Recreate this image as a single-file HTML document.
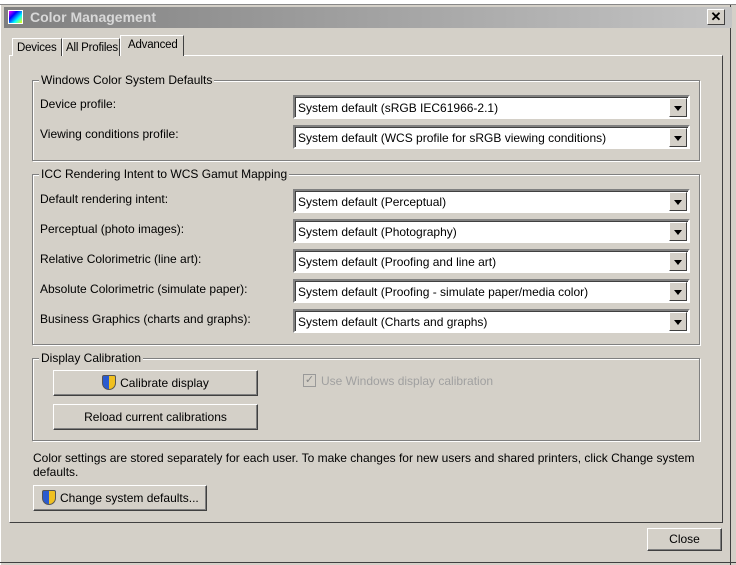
<!DOCTYPE html>
<html><head><style>
*{box-sizing:border-box;margin:0;padding:0}
body{width:736px;height:565px;background:#d4d0c8;font-family:"Liberation Sans",sans-serif;font-size:12px;color:#000;position:relative;overflow:hidden}
.a{position:absolute;white-space:nowrap}
.title{left:4px;top:7px;width:728px;height:21px;background:linear-gradient(to right,#7f7f7f,#c4c4c4)}
.title span{position:absolute;left:26px;top:2px;font-weight:bold;font-size:14px;color:#d8d8d8}
.tab{position:absolute;white-space:nowrap;border:1px solid #fff;border-right-color:#404040;border-bottom:none;background:#d4d0c8;padding:3px 0 0 4px;font-size:11.5px;letter-spacing:-0.2px}
.panel{left:9px;top:55px;width:714px;height:468px;border:1px solid;border-color:#fff #404040 #404040 #fff}
.grp{position:absolute;border:1px solid #808080;box-shadow:1px 1px 0 #fff inset,1px 1px 0 #fff}
.grp .lg{position:absolute;left:6px;top:-8px;background:#d4d0c8;padding:0 2px;white-space:nowrap}
.cb{position:absolute;left:293px;width:397px;height:24px;background:#fff;border:2px solid;border-color:#808080 #fff #fff #808080;box-shadow:inset 1px 1px 0 #404040}
.cb span{position:absolute;left:3px;top:4px;white-space:nowrap}
.cb i{position:absolute;right:1px;top:1px;width:18px;height:19px;background:#d4d0c8;border:1px solid;border-color:#fff #404040 #404040 #fff}
.cb i:after{content:"";position:absolute;left:4px;top:7px;border:4px solid transparent;border-top:5px solid #000;border-bottom:0}
.btn{position:absolute;white-space:nowrap;background:#d4d0c8;border:1px solid;border-color:#fff #404040 #404040 #fff;box-shadow:inset -1px -1px 0 #808080;text-align:center;line-height:24px}
.sh{display:inline-block;width:14px;height:15px;vertical-align:-3px;margin-right:4px;background:linear-gradient(90deg,#2a5bd0 50%,#f0c020 50%);border-radius:2px 2px 7px 7px;border:1px solid #555}
</style></head><body>
<div class="a" style="left:0;top:0;width:736px;height:5px;background:#fff;border-bottom:1px solid #888"></div>
<div class="a" style="left:0;top:5px;width:3px;height:560px;background:#d4d0c8;border-left:1px solid #fff"></div>
<div class="a" style="left:730px;top:5px;width:6px;height:560px;background:#d4d0c8;border-left:1px solid #404040"></div>
<div class="a" style="left:0;top:562px;width:736px;height:3px;border-top:1px solid #404040"></div>
<div class="a title"><div class="a" style="left:4px;top:3px;width:15px;height:14px;background:linear-gradient(135deg,#f0f,#00f,#0ff,#ff0);border:1px solid #fff"></div><span>Color Management</span>
<div class="a" style="left:703px;top:2px;width:18px;height:16px;background:#d4d0c8;border:1px solid;border-color:#fff #404040 #404040 #fff;font-weight:bold;font-size:13px;text-align:center;line-height:14px">✕</div></div>
<div class="a panel"></div>
<div class="tab" style="left:12px;top:38px;width:50px;height:18px">Devices</div>
<div class="tab" style="left:62px;top:38px;width:58px;height:18px;padding-left:3px">All Profiles</div>
<div class="tab" style="left:120px;top:35px;width:64px;height:21px;padding-left:7px">Advanced</div>

<div class="grp" style="left:32px;top:80px;width:668px;height:81px"><span class="lg">Windows Color System Defaults</span></div>
<div class="a" style="left:40px;top:97px">Device profile:</div>
<div class="cb" style="top:95px"><span>System default (sRGB IEC61966-2.1)</span><i></i></div>
<div class="a" style="left:40px;top:127px">Viewing conditions profile:</div>
<div class="cb" style="top:125px"><span>System default (WCS profile for sRGB viewing conditions)</span><i></i></div>

<div class="grp" style="left:32px;top:174px;width:668px;height:171px"><span class="lg">ICC Rendering Intent to WCS Gamut Mapping</span></div>
<div class="a" style="left:40px;top:192px">Default rendering intent:</div>
<div class="cb" style="top:189px"><span>System default (Perceptual)</span><i></i></div>
<div class="a" style="left:40px;top:222px">Perceptual (photo images):</div>
<div class="cb" style="top:219px"><span>System default (Photography)</span><i></i></div>
<div class="a" style="left:40px;top:252px">Relative Colorimetric (line art):</div>
<div class="cb" style="top:249px"><span>System default (Proofing and line art)</span><i></i></div>
<div class="a" style="left:40px;top:282px">Absolute Colorimetric (simulate paper):</div>
<div class="cb" style="top:279px"><span>System default (Proofing - simulate paper/media color)</span><i></i></div>
<div class="a" style="left:40px;top:312px">Business Graphics (charts and graphs):</div>
<div class="cb" style="top:309px"><span>System default (Charts and graphs)</span><i></i></div>

<div class="grp" style="left:32px;top:358px;width:668px;height:83px"><span class="lg">Display Calibration</span></div>
<div class="btn" style="left:53px;top:370px;width:205px;height:26px"><span class="sh"></span>Calibrate display</div>
<div class="btn" style="left:53px;top:404px;width:205px;height:26px">Reload current calibrations</div>
<div class="a" style="left:303px;top:374px;width:13px;height:13px;border:1px solid #999;background:#d4d0c8;color:#888;font-size:11px;line-height:11px;text-align:center">✓</div>
<div class="a" style="left:321px;top:374px;color:#a0a0a0">Use Windows display calibration</div>

<div class="a" style="left:33px;top:451px">Color settings are stored separately for each user. To make changes for new users and shared printers, click Change system</div>
<div class="a" style="left:33px;top:465px">defaults.</div>
<div class="btn" style="left:33px;top:485px;width:174px;height:26px;text-align:left;padding-left:8px"><span class="sh"></span>Change system defaults...</div>
<div class="btn" style="left:647px;top:528px;width:75px;height:23px;line-height:21px">Close</div>
</body></html>
